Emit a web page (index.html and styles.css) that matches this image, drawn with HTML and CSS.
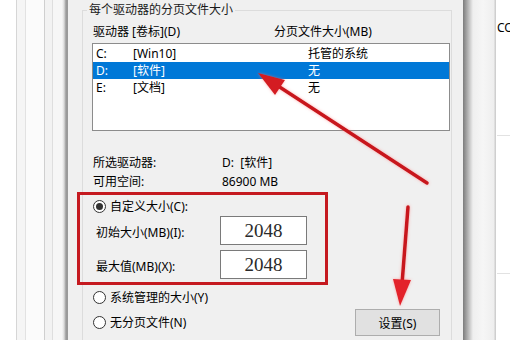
FILE: index.html
```html
<!DOCTYPE html>
<html lang="zh-CN">
<head>
  <meta charset="UTF-8">
  <title>虚拟内存</title>
  <link rel="stylesheet" href="styles.css">
</head>
<body>
  <div class="desk">
    <div class="behind-left"></div>

    <div class="dialog">
      <fieldset class="group">
        <legend>每个驱动器的分页文件大小</legend>
        <div class="cols">
          <span class="col-drive">驱动器 [卷标](D)</span>
          <span>分页文件大小(MB)</span>
        </div>
        <ul class="drives">
          <li><span class="letter">C:</span><span class="label">[Win10]</span><span>托管的系统</span></li>
          <li class="sel"><span class="letter">D:</span><span class="label">[软件]</span><span>无</span></li>
          <li><span class="letter">E:</span><span class="label">[文档]</span><span>无</span></li>
        </ul>

        <div class="info">
          <span>所选驱动器:</span><span>D:&nbsp;&nbsp;[软件]</span>
          <span>可用空间:</span><span>86900 MB</span>
        </div>

        <div class="radio on">自定义大小(C):</div>
        <div class="field"><span>初始大小(MB)(I):</span><div class="box">2048</div></div>
        <div class="field"><span>最大值(MB)(X):</span><div class="box">2048</div></div>

        <div class="bottom">
          <div class="radios">
            <div class="radio">系统管理的大小(Y)</div>
            <div class="radio">无分页文件(N)</div>
          </div>
          <button type="button" class="set-btn">设置(S)</button>
        </div>
      </fieldset>
    </div>

    <div class="behind-right">
      <div class="other-win"><span>CO</span></div>
    </div>
  </div>

  <!-- annotations drawn over the screenshot -->
  <div class="mark"></div>
  <svg class="arrows" width="510" height="340" viewBox="0 0 510 340">
    <defs>
      <filter id="glow" x="-20%" y="-20%" width="140%" height="140%">
        <feGaussianBlur in="SourceAlpha" stdDeviation="1.6" result="b"/>
        <feFlood flood-color="#ff6a6a" flood-opacity="0.55"/>
        <feComposite in2="b" operator="in" result="g"/>
        <feMerge><feMergeNode in="g"/><feMergeNode in="SourceGraphic"/></feMerge>
      </filter>
    </defs>
    <g filter="url(#glow)">
      <line x1="427" y1="183" x2="275" y2="84" stroke="#c8161d" stroke-width="3.5" stroke-linecap="round"/>
      <polygon points="258,73 285,80 275,95" fill="#d41a22"/>
      <line x1="408" y1="207" x2="402" y2="284" stroke="#c8161d" stroke-width="3.5" stroke-linecap="round"/>
      <polygon points="400,306 393,279 411,280" fill="#e3222b"/>
    </g>
  </svg>
</body>
</html>
```

FILE: styles.css
```css
body {
  margin: 0;
  font-family: "Noto Sans", "Noto Sans CJK SC", sans-serif;
  font-size: 12px;
  color: #000;
  background: #fff;
}

.desk {
  display: flex;
  width: 510px;
  height: 340px;
  overflow: hidden;
}

.behind-left {
  width: 68px;
  flex: none;
  background: linear-gradient(to right,
    #fff 0 16px, #d6d6d6 16px 17px, #f5f5f5 17px 25px, #e2e2e2 25px 26px,
    #fbfbfb 26px 44px, #cfcfcf 44px 45px, #f2f2f2 45px 52px, #dedede 52px 53px,
    #f6f6f6 53px 62px, #dcdcdc 64px, #9a9a9a 66px 68px);
}

.dialog {
  width: 395px;
  flex: none;
  background: #f0f0f0;
}

.group {
  margin: 2px 0 0 14px;
  width: 370px;
  height: 400px;
  box-sizing: border-box;
  padding: 0 1px 0 9px;
  border: 1px solid #dcdcdc;
}

.group legend {
  margin-left: -5px;
  padding: 0 2px;
  line-height: 16px;
  color: #1a1a1a;
}

.cols {
  display: flex;
  margin-top: 6px;
  line-height: 16px;
}

.col-drive {
  width: 181px;
  padding-left: 1px;
}

.drives {
  list-style: none;
  margin: 3px 0 0;
  padding: 1px 0 0;
  height: 88px;
  box-sizing: border-box;
  border: 1px solid #8c8c8c;
  background: #fff;
}

.drives li {
  display: flex;
  height: 17px;
  line-height: 17px;
  padding-left: 3px;
}

.drives li.sel {
  background: #0078d7;
  color: #fff;
}

.letter {
  width: 37px;
}

.label {
  width: 175px;
}

.info {
  display: grid;
  grid-template-columns: 129px auto;
  grid-auto-rows: 19px;
  align-items: center;
  margin-top: 22px;
  line-height: 16px;
  padding-left: 1px;
}

.radio {
  position: relative;
  height: 16px;
  line-height: 16px;
  padding-left: 18px;
}

.radio::before {
  content: "";
  position: absolute;
  left: 1px;
  top: 1px;
  width: 13px;
  height: 13px;
  box-sizing: border-box;
  border: 1px solid #333;
  border-radius: 50%;
  background: #fff;
}

.radio.on::after {
  content: "";
  position: absolute;
  left: 4px;
  top: 4px;
  width: 7px;
  height: 7px;
  border-radius: 50%;
  background: #333;
}

.info + .radio {
  margin-top: 8px;
}

.field {
  display: flex;
  align-items: center;
  height: 29px;
  margin-top: 1px;
}

.field + .field {
  margin-top: 5px;
}

.field span {
  width: 124px;
  padding-left: 4px;
  padding-top: 2px;
}

.box {
  width: 87px;
  height: 29px;
  box-sizing: border-box;
  border: 1px solid #7a7a7a;
  background: #fff;
  font-family: "Liberation Serif", serif;
  font-size: 19px;
  line-height: 27px;
  text-align: center;
  color: #2a2a2a;
}

.bottom {
  display: flex;
  justify-content: space-between;
  align-items: flex-start;
  margin-top: 11px;
}

.radios {
  display: flex;
  flex-direction: column;
  gap: 9px;
}

.set-btn {
  margin: 19px 10px 0 0;
  width: 85px;
  height: 27px;
  padding: 0;
  border: 1px solid #adadad;
  background: #e1e1e1;
  font-family: inherit;
  font-size: 12px;
  color: #000;
}

.behind-right {
  flex: 1;
  display: flex;
  background: linear-gradient(to right,
    #7c7c7c 0, #a9a9a9 4px, #d8d8d8 8px, #efefef 10px, #f6f6f6 20px, #eeeeee 31px,
    #cfcfcf 32px 33px, #fff 33px);
}

.other-win {
  margin-left: 34px;
  flex: 1;
  padding-top: 20px;
  line-height: 16px;
  background:
    linear-gradient(#e2e2e2, #e2e2e2) 0 135px / 100% 1px no-repeat,
    linear-gradient(#e2e2e2, #e2e2e2) 0 273px / 100% 1px no-repeat;
}

.mark {
  position: absolute;
  left: 77px;
  top: 192px;
  width: 251px;
  height: 93px;
  box-sizing: border-box;
  border: 3px solid #c51a20;
}

.arrows {
  position: absolute;
  left: 0;
  top: 0;
  pointer-events: none;
}
```
